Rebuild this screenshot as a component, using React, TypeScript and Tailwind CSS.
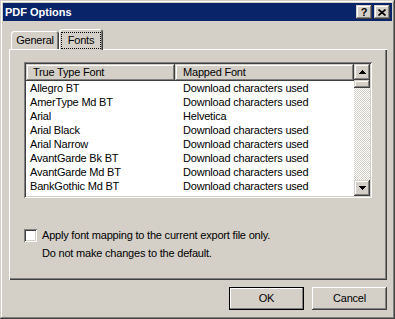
const rows: [string, string][] = [
  ["Allegro BT", "Download characters used"],
  ["AmerType Md BT", "Download characters used"],
  ["Arial", "Helvetica"],
  ["Arial Black", "Download characters used"],
  ["Arial Narrow", "Download characters used"],
  ["AvantGarde Bk BT", "Download characters used"],
  ["AvantGarde Md BT", "Download characters used"],
  ["BankGothic Md BT", "Download characters used"],
  ["Benguiat Bk BT", "Download characters used"],
];

const raised =
  "shadow-[inset_-1px_-1px_#404040,inset_1px_1px_#d4d0c8,inset_-2px_-2px_#808080,inset_2px_2px_#ffffff]";
const sunken =
  "shadow-[inset_1px_1px_#808080,inset_-1px_-1px_#ffffff,inset_2px_2px_#404040,inset_-2px_-2px_#d4d0c8]";

function Arrow({ down }: { down?: boolean }) {
  return (
    <svg width="7" height="4" viewBox="0 0 7 4" shapeRendering="crispEdges">
      <polygon points={down ? "0,0 7,0 3.5,3.6" : "0,4 7,4 3.5,0.4"} fill="#000" />
    </svg>
  );
}

export default function App() {
  return (
    <div className="flex h-[319px] w-[395px] flex-col bg-[#d4d0c8] p-[3px] font-['Liberation_Sans',Arial,sans-serif] text-[11px] text-black shadow-[inset_-1px_-1px_#404040,inset_1px_1px_#d4d0c8,inset_-2px_-2px_#808080,inset_2px_2px_#ffffff]">
      {/* title bar */}
      <div className="flex h-[18px] items-center bg-[#0a246a] pl-[2px] pr-[2px]">
        <span className="flex-1 text-[11px] font-bold text-white">PDF Options</span>
        <div className="flex gap-[2px]">
          <div className={`flex h-[14px] w-[16px] items-center justify-center bg-[#d4d0c8] text-[11px] font-bold leading-none ${raised}`}>
            ?
          </div>
          <div className={`flex h-[14px] w-[16px] items-center justify-center bg-[#d4d0c8] ${raised}`}>
            <svg width="8" height="7" viewBox="0 0 8 7">
              <path d="M0.5 0.5 L7.5 6.5 M7.5 0.5 L0.5 6.5" stroke="#000" strokeWidth="1.6" />
            </svg>
          </div>
        </div>
      </div>

      <div className="pl-[6px] pr-[5px] tracking-[-0.2px]">
        {/* tabs */}
        <div className="mt-[8px] flex h-[20px] items-end pl-[2px]">
          <div className="flex h-[18px] w-[48px] items-center justify-center rounded-t-[3px] shadow-[inset_1px_1px_#ffffff,inset_-1px_0_#404040,inset_-2px_0_#808080]">
            General
          </div>
          <div className="relative z-10 -mb-[1px] flex h-[21px] w-[44px] justify-center rounded-t-[3px] bg-[#d4d0c8] pt-[3px] shadow-[inset_1px_1px_#ffffff,inset_-1px_0_#404040,inset_-2px_0_#808080]">
            <span className="flex h-[17px] w-[40px] items-center justify-center border border-dotted border-black">
              Fonts
            </span>
          </div>
        </div>

        {/* panel */}
        <div className="h-[231px] pl-[15px] pt-[13px] shadow-[inset_1px_1px_#ffffff,inset_-1px_-1px_#404040,inset_-2px_-2px_#808080]">
          <div className={`flex h-[136px] w-[348px] bg-white p-[2px] ${sunken}`}>
            <div className="flex flex-1 flex-col overflow-hidden">
              <div className="flex h-[17px] shrink-0 bg-[#d4d0c8]">
                <div className={`flex w-[149px] items-center pl-[7px] ${raised}`}>True Type Font</div>
                <div className={`flex flex-1 items-center pl-[8px] ${raised}`}>Mapped Font</div>
              </div>
              {rows.map(([a, b]) => (
                <div key={a} className="flex h-[14px] shrink-0 items-center">
                  <span className="w-[149px] pl-[4px]">{a}</span>
                  <span className="pl-[8px]">{b}</span>
                </div>
              ))}
            </div>
            <div className="flex w-[16px] flex-col">
              <div className={`flex h-[16px] items-center justify-center bg-[#d4d0c8] ${raised}`}>
                <Arrow />
              </div>
              <div className={`h-[8px] bg-[#d4d0c8] ${raised}`} />
              <div className="flex-1 bg-[repeating-conic-gradient(#ffffff_0_25%,#d4d0c8_0_50%)] bg-[length:2px_2px]" />
              <div className={`flex h-[16px] items-center justify-center bg-[#d4d0c8] ${raised}`}>
                <Arrow down />
              </div>
            </div>
          </div>

          <div className="mt-[31px] flex">
            <div className={`h-[13px] w-[13px] bg-white ${sunken}`} />
            <div className="-mt-[3px] ml-[5px] leading-[18px]">
              <div>Apply font mapping to the current export file only.</div>
              <div>Do not make changes to the default.</div>
            </div>
          </div>
        </div>

        {/* buttons */}
        <div className="mt-[7px] flex justify-end gap-[8px]">
          <div className="h-[23px] w-[75px] border border-black">
            <div className="flex h-full items-center justify-center bg-[#d4d0c8] shadow-[inset_-1px_-1px_#808080,inset_1px_1px_#ffffff]">
              OK
            </div>
          </div>
          <div className="flex h-[23px] w-[75px] items-center justify-center bg-[#d4d0c8] shadow-[inset_-1px_-1px_#404040,inset_1px_1px_#ffffff,inset_-2px_-2px_#808080]">
            Cancel
          </div>
        </div>
      </div>
    </div>
  );
}
